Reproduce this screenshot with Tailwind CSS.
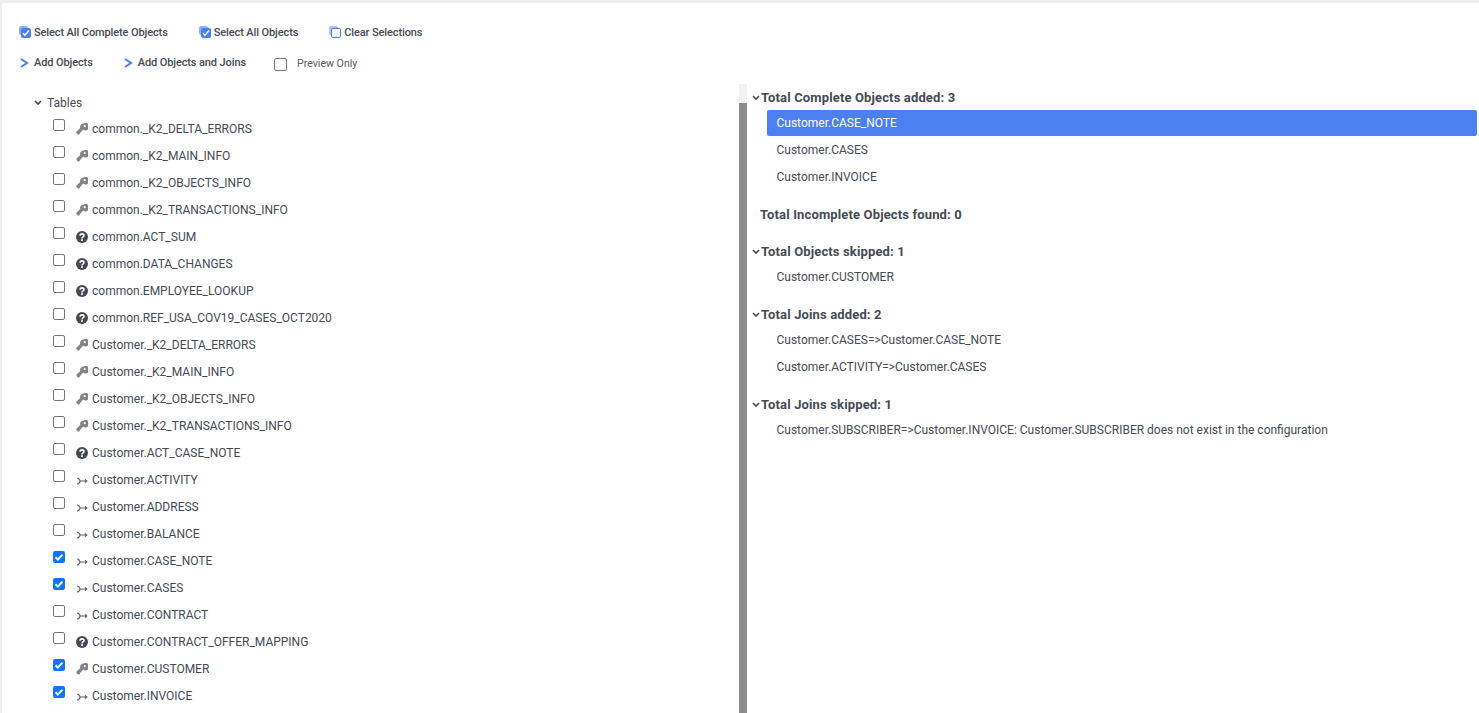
<!DOCTYPE html>
<html lang="en">
<head>
<meta charset="UTF-8">
<title>Add Objects</title>
<script src="https://cdn.jsdelivr.net/npm/@tailwindcss/browser@4"></script>
</head>
<body class="h-[713px] overflow-hidden bg-[#eeeeee] pt-[3px] pl-[2px] font-['Roboto',sans-serif] text-[12px] text-[#444a55]">
<svg class="hidden">
  <symbol id="key" viewBox="0 0 12 12"><path fill="#818388" d="M7.8 0.4a3.7 3.7 0 0 0-3.6 4.6L0.4 8.8v1.2l1.4 1.5h1.3l0.8-0.8V9.6h1.2l0.2-1.2 1.9-1.8A3.7 3.7 0 1 0 7.8 0.4zm0.9 1.7a1.1 1.1 0 1 1 0 2.2 1.1 1.1 0 0 1 0-2.2z"/></symbol>
  <symbol id="help" viewBox="0 0 12 12"><circle cx="6" cy="6" r="6" fill="#444a55"/><path fill="none" stroke="#fff" stroke-width="1.6" d="M4.1 4.7c0-2.4 3.9-2.4 3.9-0.2 0 1.4-2 1.3-2 2.9"/><rect x="5.1" y="8.2" width="1.8" height="1.7" fill="#fff"/></symbol>
  <symbol id="join" viewBox="0 0 12 8"><path fill="none" stroke="#5c6068" stroke-width="1.2" d="M1 1c2 0 2.5 1.2 3.2 3-0.7 1.8-1.2 3-3.2 3M4.2 4h6.6M9 2.4l1.8 1.6L9 5.6"/></symbol>
  <symbol id="blue-chevron" viewBox="0 0 9 10"><path fill="none" stroke="#4a7ff0" stroke-width="2" d="M1 1l6 4-6 4"/></symbol>
  <symbol id="down" viewBox="0 0 8 6"><path fill="none" stroke="#444a55" stroke-width="1.6" d="M1 1l3 3 3-3"/></symbol>
  <symbol id="tick" viewBox="0 0 12 12"><rect width="12" height="12" rx="2.2" fill="#0a75ff"/><path fill="none" stroke="#fff" stroke-width="2" d="M2.5 6.2l2.4 2.4 4.5-5"/></symbol>
</svg>

<div class="flex h-[710px] flex-col bg-white">
  <!-- toolbar -->
  <div class="flex h-[81px] flex-col pl-[17px] font-medium text-[#444a55]">
    <div class="mt-[21px] flex h-[18px] items-center text-[11px] tracking-[-0.11px]">
      <span class="relative mr-[3px] mb-[2px] h-[12px] w-[12px]"><span class="absolute top-0 left-0 h-[9px] w-[9px] rounded-[2px] bg-[#8fb0f3]"></span><span class="absolute right-0 bottom-0 flex h-[10px] w-[10px] items-center justify-center rounded-[2px] bg-[#4a7ff0]"><svg class="h-[8px] w-[8px]" viewBox="0 0 8 8"><path fill="none" stroke="#fff" stroke-width="1.6" d="M1 4.2l2 2 4-4.6"/></svg></span></span>
      <span>Select All Complete Objects</span>
      <span class="relative mr-[3px] mb-[2px] ml-[31px] h-[12px] w-[12px]"><span class="absolute top-0 left-0 h-[9px] w-[9px] rounded-[2px] bg-[#8fb0f3]"></span><span class="absolute right-0 bottom-0 flex h-[10px] w-[10px] items-center justify-center rounded-[2px] bg-[#4a7ff0]"><svg class="h-[8px] w-[8px]" viewBox="0 0 8 8"><path fill="none" stroke="#fff" stroke-width="1.6" d="M1 4.2l2 2 4-4.6"/></svg></span></span>
      <span>Select All Objects</span>
      <span class="relative mr-[3px] mb-[2px] ml-[31px] h-[12px] w-[12px]"><span class="absolute top-0 left-0 h-[9px] w-[9px] rounded-[2px] bg-[#a9c1f4]"></span><span class="absolute right-0 bottom-0 h-[10px] w-[10px] rounded-[2px] border border-[#4a7ff0] bg-white"></span></span>
      <span>Clear Selections</span>
    </div>
    <div class="mt-[11px] flex h-[20px] items-center text-[11px] tracking-[-0.11px]">
      <svg class="mr-[5px] ml-[1px] h-[10px] w-[9px]"><use href="#blue-chevron"/></svg>
      <span>Add Objects</span>
      <svg class="mr-[5px] ml-[31px] h-[10px] w-[9px]"><use href="#blue-chevron"/></svg>
      <span>Add Objects and Joins</span>
      <span class="mt-[2px] mr-[10px] ml-[28px] h-[13px] w-[13px] rounded-[2px] border border-[#767676]"></span>
      <span class="mt-[2px] text-[10.6px] font-normal tracking-normal text-[#555a63]">Preview Only</span>
    </div>
  </div>

  <div class="flex min-h-0 flex-1">
    <!-- tree -->
    <div class="w-[737px] shrink-0 overflow-hidden">
      <div class="flex h-[31px] items-start pl-[32px]">
        <span class="flex h-[26px] items-center pt-[12px]"><svg class="mr-[5px] h-[6px] w-[8px]"><use href="#down"/></svg><span>Tables</span></span>
      </div>
      <div class="pl-[51px]">
        <div class="flex h-[27px] items-center"><span class="mb-[7px] h-[12px] w-[12px] rounded-[2px] border border-[#767676]"></span><svg class="mt-[1px] mr-[4px] ml-[11px] h-[12px] w-[12px]"><use href="#key"/></svg><span>common._K2_DELTA_ERRORS</span></div>
        <div class="flex h-[27px] items-center"><span class="mb-[7px] h-[12px] w-[12px] rounded-[2px] border border-[#767676]"></span><svg class="mt-[1px] mr-[4px] ml-[11px] h-[12px] w-[12px]"><use href="#key"/></svg><span>common._K2_MAIN_INFO</span></div>
        <div class="flex h-[27px] items-center"><span class="mb-[7px] h-[12px] w-[12px] rounded-[2px] border border-[#767676]"></span><svg class="mt-[1px] mr-[4px] ml-[11px] h-[12px] w-[12px]"><use href="#key"/></svg><span>common._K2_OBJECTS_INFO</span></div>
        <div class="flex h-[27px] items-center"><span class="mb-[7px] h-[12px] w-[12px] rounded-[2px] border border-[#767676]"></span><svg class="mt-[1px] mr-[4px] ml-[11px] h-[12px] w-[12px]"><use href="#key"/></svg><span>common._K2_TRANSACTIONS_INFO</span></div>
        <div class="flex h-[27px] items-center"><span class="mb-[7px] h-[12px] w-[12px] rounded-[2px] border border-[#767676]"></span><svg class="mt-[1px] mr-[4px] ml-[11px] h-[12px] w-[12px]"><use href="#help"/></svg><span>common.ACT_SUM</span></div>
        <div class="flex h-[27px] items-center"><span class="mb-[7px] h-[12px] w-[12px] rounded-[2px] border border-[#767676]"></span><svg class="mt-[1px] mr-[4px] ml-[11px] h-[12px] w-[12px]"><use href="#help"/></svg><span>common.DATA_CHANGES</span></div>
        <div class="flex h-[27px] items-center"><span class="mb-[7px] h-[12px] w-[12px] rounded-[2px] border border-[#767676]"></span><svg class="mt-[1px] mr-[4px] ml-[11px] h-[12px] w-[12px]"><use href="#help"/></svg><span>common.EMPLOYEE_LOOKUP</span></div>
        <div class="flex h-[27px] items-center"><span class="mb-[7px] h-[12px] w-[12px] rounded-[2px] border border-[#767676]"></span><svg class="mt-[1px] mr-[4px] ml-[11px] h-[12px] w-[12px]"><use href="#help"/></svg><span>common.REF_USA_COV19_CASES_OCT2020</span></div>
        <div class="flex h-[27px] items-center"><span class="mb-[7px] h-[12px] w-[12px] rounded-[2px] border border-[#767676]"></span><svg class="mt-[1px] mr-[4px] ml-[11px] h-[12px] w-[12px]"><use href="#key"/></svg><span>Customer._K2_DELTA_ERRORS</span></div>
        <div class="flex h-[27px] items-center"><span class="mb-[7px] h-[12px] w-[12px] rounded-[2px] border border-[#767676]"></span><svg class="mt-[1px] mr-[4px] ml-[11px] h-[12px] w-[12px]"><use href="#key"/></svg><span>Customer._K2_MAIN_INFO</span></div>
        <div class="flex h-[27px] items-center"><span class="mb-[7px] h-[12px] w-[12px] rounded-[2px] border border-[#767676]"></span><svg class="mt-[1px] mr-[4px] ml-[11px] h-[12px] w-[12px]"><use href="#key"/></svg><span>Customer._K2_OBJECTS_INFO</span></div>
        <div class="flex h-[27px] items-center"><span class="mb-[7px] h-[12px] w-[12px] rounded-[2px] border border-[#767676]"></span><svg class="mt-[1px] mr-[4px] ml-[11px] h-[12px] w-[12px]"><use href="#key"/></svg><span>Customer._K2_TRANSACTIONS_INFO</span></div>
        <div class="flex h-[27px] items-center"><span class="mb-[7px] h-[12px] w-[12px] rounded-[2px] border border-[#767676]"></span><svg class="mt-[1px] mr-[4px] ml-[11px] h-[12px] w-[12px]"><use href="#help"/></svg><span>Customer.ACT_CASE_NOTE</span></div>
        <div class="flex h-[27px] items-center"><span class="mb-[7px] h-[12px] w-[12px] rounded-[2px] border border-[#767676]"></span><svg class="mt-[2px] mr-[4px] ml-[11px] h-[8px] w-[12px]"><use href="#join"/></svg><span>Customer.ACTIVITY</span></div>
        <div class="flex h-[27px] items-center"><span class="mb-[7px] h-[12px] w-[12px] rounded-[2px] border border-[#767676]"></span><svg class="mt-[2px] mr-[4px] ml-[11px] h-[8px] w-[12px]"><use href="#join"/></svg><span>Customer.ADDRESS</span></div>
        <div class="flex h-[27px] items-center"><span class="mb-[7px] h-[12px] w-[12px] rounded-[2px] border border-[#767676]"></span><svg class="mt-[2px] mr-[4px] ml-[11px] h-[8px] w-[12px]"><use href="#join"/></svg><span>Customer.BALANCE</span></div>
        <div class="flex h-[27px] items-center"><svg class="mb-[7px] h-[12px] w-[12px]"><use href="#tick"/></svg><svg class="mt-[2px] mr-[4px] ml-[11px] h-[8px] w-[12px]"><use href="#join"/></svg><span>Customer.CASE_NOTE</span></div>
        <div class="flex h-[27px] items-center"><svg class="mb-[7px] h-[12px] w-[12px]"><use href="#tick"/></svg><svg class="mt-[2px] mr-[4px] ml-[11px] h-[8px] w-[12px]"><use href="#join"/></svg><span>Customer.CASES</span></div>
        <div class="flex h-[27px] items-center"><span class="mb-[7px] h-[12px] w-[12px] rounded-[2px] border border-[#767676]"></span><svg class="mt-[2px] mr-[4px] ml-[11px] h-[8px] w-[12px]"><use href="#join"/></svg><span>Customer.CONTRACT</span></div>
        <div class="flex h-[27px] items-center"><span class="mb-[7px] h-[12px] w-[12px] rounded-[2px] border border-[#767676]"></span><svg class="mt-[1px] mr-[4px] ml-[11px] h-[12px] w-[12px]"><use href="#help"/></svg><span>Customer.CONTRACT_OFFER_MAPPING</span></div>
        <div class="flex h-[27px] items-center"><svg class="mb-[7px] h-[12px] w-[12px]"><use href="#tick"/></svg><svg class="mt-[1px] mr-[4px] ml-[11px] h-[12px] w-[12px]"><use href="#key"/></svg><span>Customer.CUSTOMER</span></div>
        <div class="flex h-[27px] items-center"><svg class="mb-[7px] h-[12px] w-[12px]"><use href="#tick"/></svg><svg class="mt-[2px] mr-[4px] ml-[11px] h-[8px] w-[12px]"><use href="#join"/></svg><span>Customer.INVOICE</span></div>
      </div>
    </div>

    <!-- splitter -->
    <div class="flex w-[8px] shrink-0 flex-col">
      <div class="h-[19px] bg-[#f1f1f1]"></div>
      <div class="flex-1 bg-[#8c8c8c]"></div>
    </div>

    <!-- results -->
    <div class="min-w-0 flex-1 pt-[4px] pr-[2px]">
      <div class="flex h-[20px] items-center pl-[5px] text-[13px] font-bold tracking-[0.14px]"><svg class="mr-[1px] h-[6px] w-[8px]"><use href="#down"/></svg>Total Complete Objects added: 3</div>
      <div class="mt-[2px] ml-[20px] flex h-[26px] items-center rounded-[2px] bg-[#4c80f1] pl-[9.5px] text-white">Customer.CASE_NOTE</div>
      <div class="ml-[20px] flex h-[27px] items-center pl-[9.5px]">Customer.CASES</div>
      <div class="ml-[20px] flex h-[27px] items-center pl-[9.5px]">Customer.INVOICE</div>
      <div class="mt-[15px] flex h-[20px] items-center pl-[13px] text-[13px] font-bold tracking-[0.14px]">Total Incomplete Objects found: 0</div>
      <div class="mt-[17px] flex h-[20px] items-center pl-[5px] text-[13px] font-bold tracking-[0.14px]"><svg class="mr-[1px] h-[6px] w-[8px]"><use href="#down"/></svg>Total Objects skipped: 1</div>
      <div class="mt-[1px] ml-[20px] flex h-[27px] items-center pl-[9.5px]">Customer.CUSTOMER</div>
      <div class="mt-[15px] flex h-[20px] items-center pl-[5px] text-[13px] font-bold tracking-[0.14px]"><svg class="mr-[1px] h-[6px] w-[8px]"><use href="#down"/></svg>Total Joins added: 2</div>
      <div class="mt-[1px] ml-[20px] flex h-[27px] items-center pl-[9.5px]">Customer.CASES=&gt;Customer.CASE_NOTE</div>
      <div class="ml-[20px] flex h-[27px] items-center pl-[9.5px]">Customer.ACTIVITY=&gt;Customer.CASES</div>
      <div class="mt-[15px] flex h-[20px] items-center pl-[5px] text-[13px] font-bold tracking-[0.14px]"><svg class="mr-[1px] h-[6px] w-[8px]"><use href="#down"/></svg>Total Joins skipped: 1</div>
      <div class="mt-[1px] ml-[20px] flex h-[27px] items-center pl-[9.5px]">Customer.SUBSCRIBER=&gt;Customer.INVOICE: Customer.SUBSCRIBER does not exist in the configuration</div>
    </div>
  </div>
</div>
</body>
</html>
